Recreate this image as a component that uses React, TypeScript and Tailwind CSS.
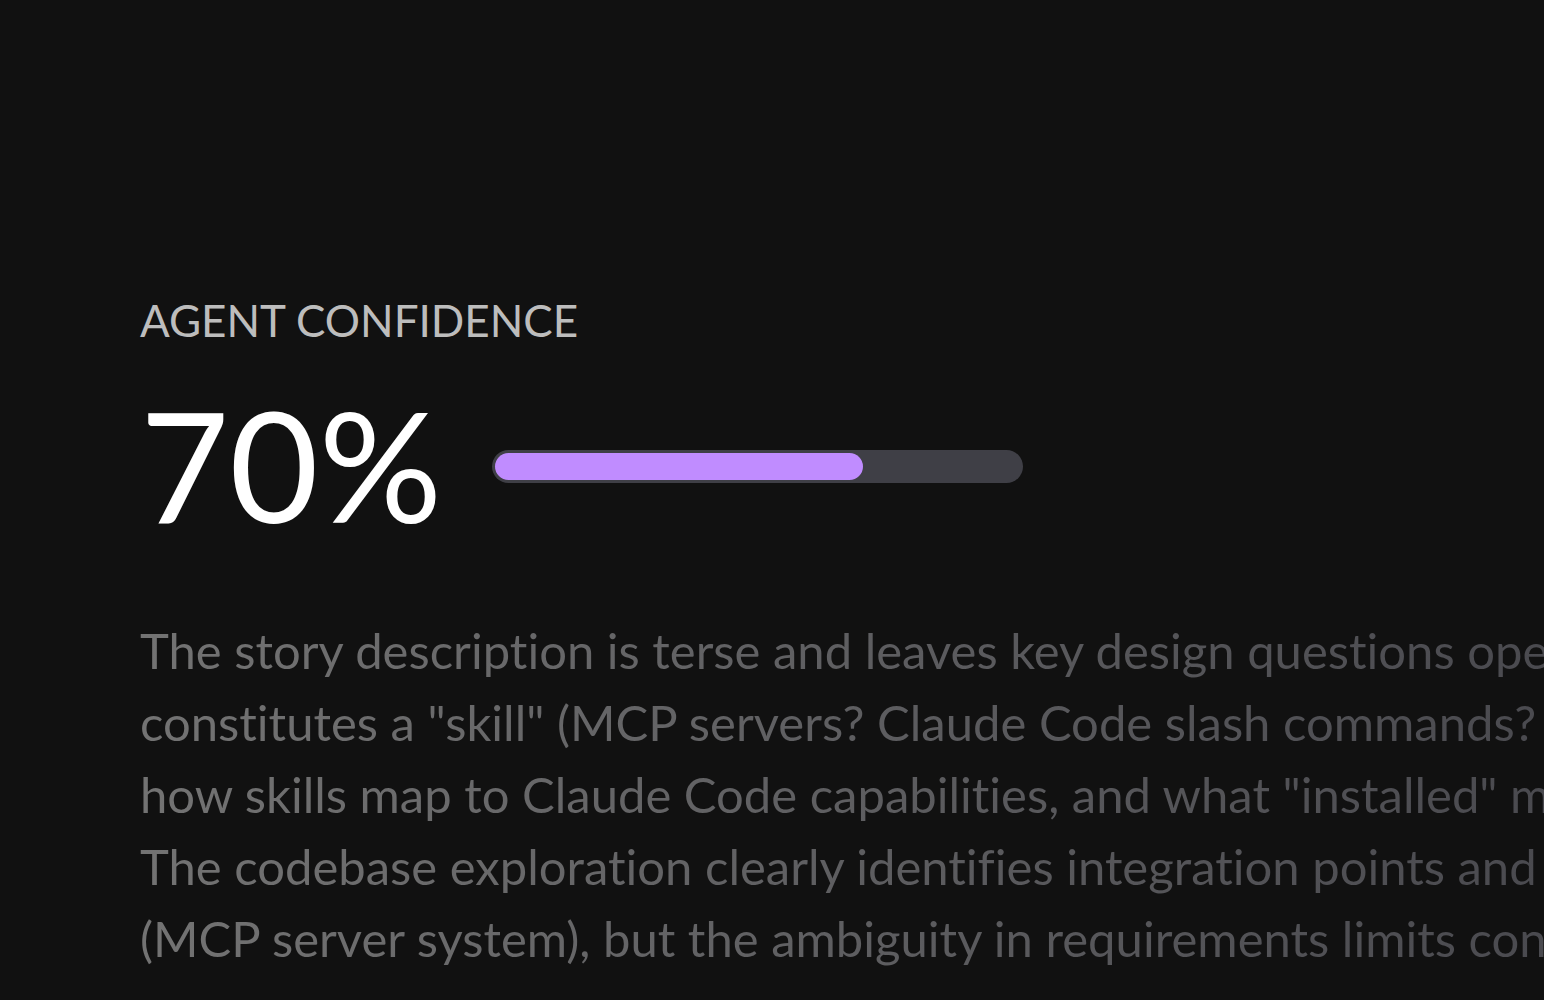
const lines = [
  'The story description is terse and leaves key design questions open: what exactly',
  'constitutes a "skill" (MCP servers? Claude Code slash commands? prompt templates?),',
  'how skills map to Claude Code capabilities, and what "installed" means for a project.',
  'The codebase exploration clearly identifies integration points and a natural extension',
  '(MCP server system), but the ambiguity in requirements limits confidence in the plan.',
]

const ConfidenceBar = ({ value }: { value: number }) => (
  <div className="mt-[5px] h-[33px] w-[531px] rounded-full bg-[#3f3f46] p-[3px]">
    <div
      className="h-full rounded-full bg-[#c08cff]"
      style={{ width: `${value}%` }}
    />
  </div>
)

export default function App() {
  const confidence = 70

  return (
    <div
      className="min-h-[1000px] w-full overflow-hidden bg-[#111111] pl-[140px] pt-[292px] [font-variant-ligatures:none]"
      style={{ fontFamily: 'Lato, "Noto Sans", sans-serif' }}
    >
      <h2 className="text-[44px] leading-[56px] text-[#bdbdbd]">
        AGENT CONFIDENCE
      </h2>

      <div className="mt-[39px] flex items-center gap-[50px]">
        <span className="text-[154px] leading-none text-white">
          {confidence}%
        </span>
        <ConfidenceBar value={confidence} />
      </div>

      {/* Rationale text fades out toward the right edge */}
      <div className="mt-[73px] bg-gradient-to-r from-[#737373] to-[#4a4a4f] bg-clip-text text-[49px] leading-[72px] text-transparent">
        {lines.map((line) => (
          <p className="whitespace-nowrap" key={line}>
            {line}
          </p>
        ))}
      </div>
    </div>
  )
}
